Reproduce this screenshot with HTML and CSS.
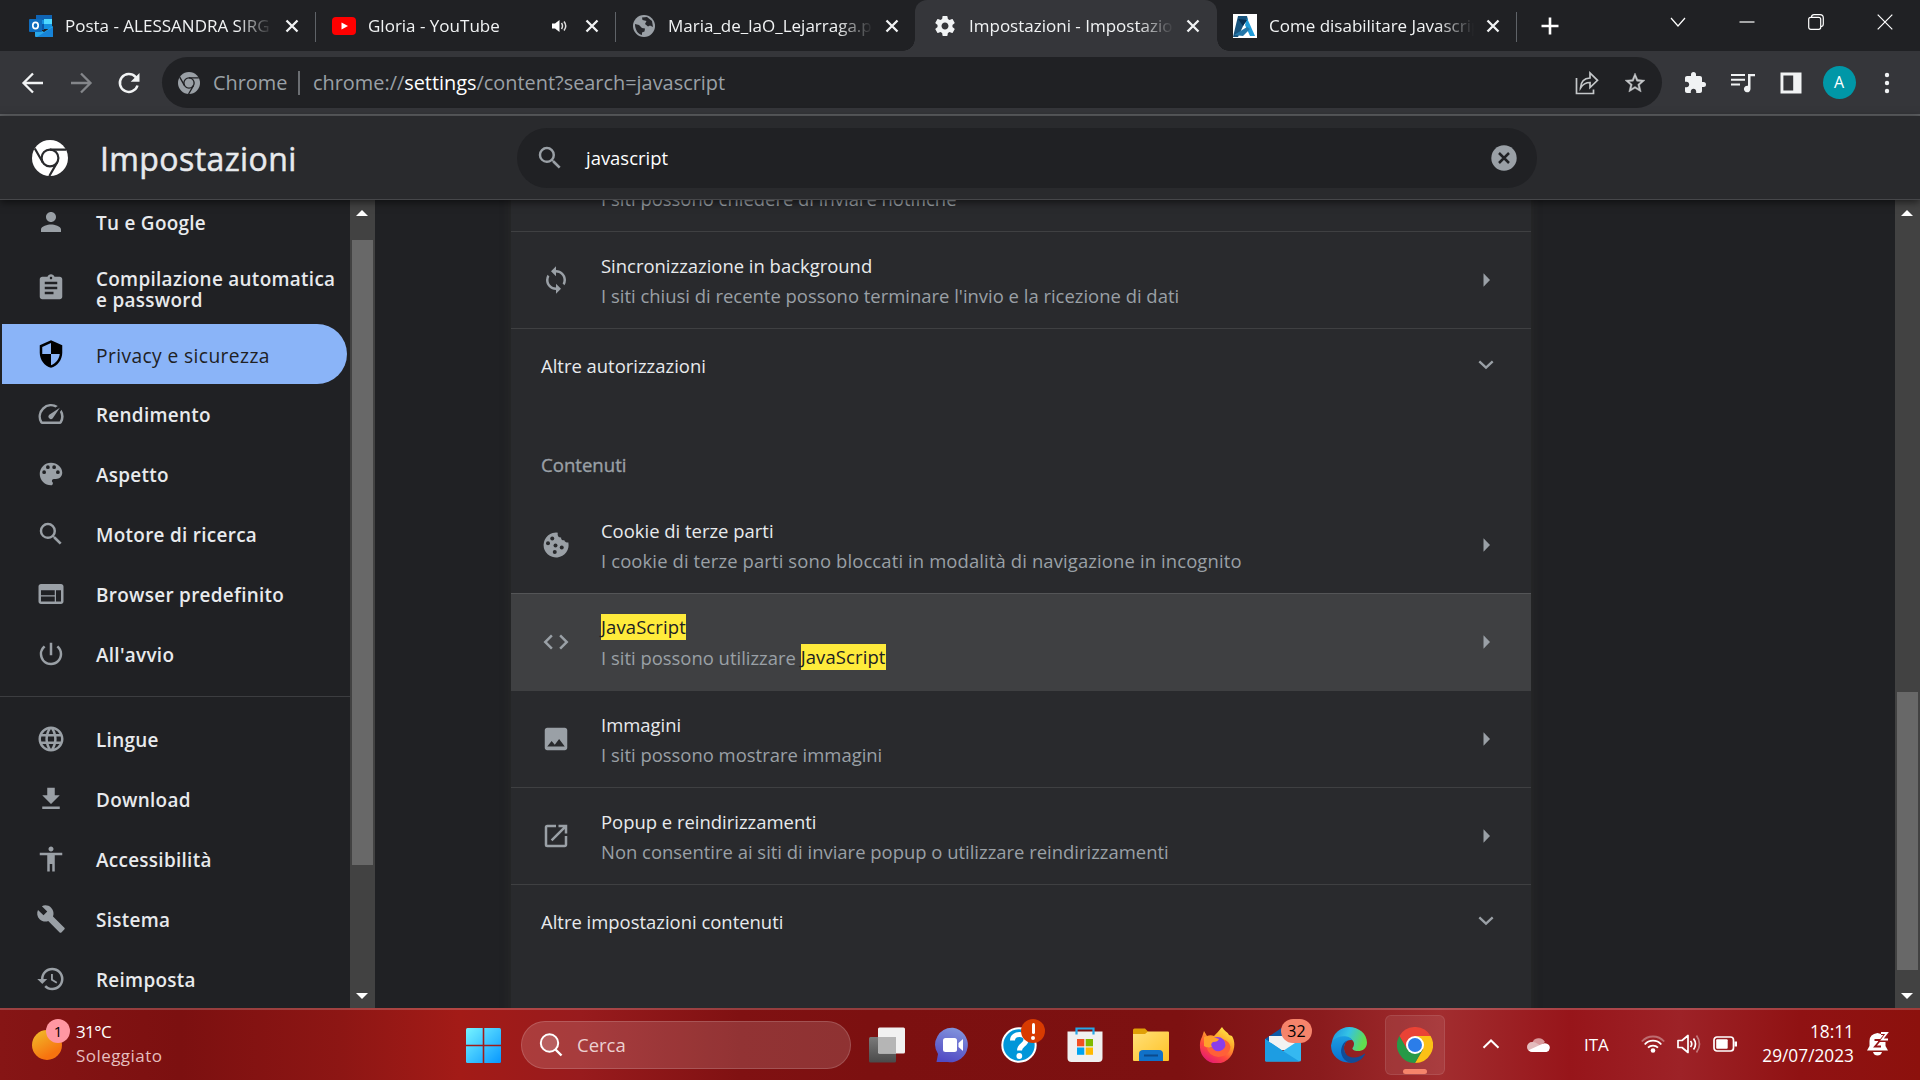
FILE: index.html
```html
<!DOCTYPE html>
<html lang="it">
<head>
<meta charset="utf-8">
<title>Impostazioni - Impostazioni contenuti</title>
<link rel="stylesheet" href="styles.css">
</head>
<body>
<svg class="defs" width="0" height="0" aria-hidden="true">
  <symbol id="x" viewBox="0 0 16 16"><path d="M2.500 2.500l11 11M13.500 2.500l-11 11" fill="none" stroke="currentColor" stroke-width="2.300"/></symbol>
  <symbol id="mono-chrome" viewBox="0 0 36 36"><circle cx="18" cy="18" r="18" fill="currentColor"/><circle cx="18" cy="18" r="8.400" fill="none" stroke="var(--gap)" stroke-width="2.200"/><path d="M18 9.600H34M10.700 22.200L2.800 8.500M25.300 22.200L17.300 36" stroke="var(--gap)" stroke-width="2.200" fill="none"/></symbol>
  <symbol id="search" viewBox="0 0 24 24"><path fill="currentColor" d="M15.500 14h-.79l-.28-.27A6.471 6.471 0 0 0 16 9.500 6.500 6.500 0 1 0 9.500 16c1.610 0 3.090-.59 4.230-1.570l.27.28v.79l5 4.990L20.490 19l-4.990-5zm-6 0C7.010 14 5 11.990 5 9.500S7.010 5 9.500 5 14 7.010 14 9.500 11.990 14 9.500 14z"/></symbol>
  <symbol id="arrow" viewBox="0 0 8 14"><path d="M0.500 0.300L7 7L0.500 13.700z" fill="currentColor"/></symbol>
  <symbol id="chevron" viewBox="0 0 16 10"><path d="M1.300 1.300L8 7.700L14.700 1.300" fill="none" stroke="currentColor" stroke-width="2.300"/></symbol>
</svg>

<div class="tabstrip">
  <div class="tab">
    <svg class="fav" viewBox="0 0 24 24"><rect x="7" y="1" width="16" height="14" rx="1" fill="#1490df"/><path d="M7 1h16v5H7z" fill="#0f64b4"/><path d="M15 5h8v5h-8z" fill="#50d9ff"/><path d="M7 10h8v6H7z" fill="#0a58a8"/><path d="M6 13l9 5 9-6v10a1 1 0 0 1-1 1H7a1 1 0 0 1-1-1z" fill="#28a8ea"/><path d="M8 23l16-10v9a1 1 0 0 1-1 1z" fill="#1784d8"/><rect x="0" y="5" width="13" height="13" rx="1" fill="#0f6cbd"/><ellipse cx="6.500" cy="11.500" rx="2.700" ry="3.100" fill="none" stroke="#fff" stroke-width="1.700"/></svg>
    <span class="tab-title">Posta - ALESSANDRA SIRG</span>
    <svg class="tab-x"><use href="#x"/></svg>
  </div>
  <div class="tab split">
    <svg class="fav" viewBox="0 0 24 24"><rect y="3" width="24" height="18" rx="4" fill="#f00"/><path d="M9.500 8.500v7l6.500-3.500z" fill="#fff"/></svg>
    <span class="tab-title">Gloria - YouTube</span>
    <svg class="speaker" viewBox="0 0 16 14"><path d="M0 4.500h3L7.500 1v12L3 9.500H0z" fill="#fff"/><path d="M9.500 4q2 3 0 6M12 2.500q3.500 4.500 0 9" fill="none" stroke="#ddd" stroke-width="1.500"/></svg>
    <svg class="tab-x"><use href="#x"/></svg>
  </div>
  <div class="tab split">
    <svg class="fav" viewBox="0 0 24 24"><circle cx="12" cy="12" r="11" fill="#9aa0a6"/><path d="M10 3.500l5-.5 5 4 1 6-3-1.500-2 1-3-2.500 1.500-3-4-1zM3 10l4 1 3 3 3 .5-.5 3-2.500 1V21C6 20 3 16 3 10z" fill="#26272b"/></svg>
    <span class="tab-title">Maria_de_laO_Lejarraga.pd</span>
    <svg class="tab-x"><use href="#x"/></svg>
  </div>
  <div class="tab active">
    <svg class="fav" viewBox="0 0 24 24"><path fill="#f1f3f4" d="M19.430 12.980c.04-.32.070-.64.070-.98s-.03-.66-.07-.98l2.110-1.650c.19-.15.24-.42.12-.64l-2-3.460c-.12-.22-.39-.3-.61-.22l-2.490 1c-.52-.4-1.080-.73-1.690-.98l-.38-2.650A.488.488 0 0 0 14 2h-4c-.25 0-.46.18-.49.420l-.38 2.650c-.61.250-1.170.590-1.690.980l-2.490-1c-.23-.09-.49 0-.61.220l-2 3.460c-.13.220-.07.490.120.640l2.110 1.650c-.04.320-.07.650-.07.980s.030.660.070.980l-2.110 1.650c-.19.150-.24.420-.12.640l2 3.460c.12.220.390.300.610.220l2.490-1c.52.400 1.080.730 1.690.980l.38 2.650c.03.240.240.420.490.420h4c.250 0 .46-.18.490-.42l.38-2.650c.61-.25 1.170-.59 1.690-.98l2.490 1c.23.090.490 0 .61-.22l2-3.460c.12-.22.070-.49-.12-.64l-2.110-1.650zM12 15.500c-1.930 0-3.500-1.570-3.500-3.500s1.570-3.500 3.500-3.500 3.500 1.570 3.500 3.500-1.570 3.500-3.500 3.500z"/></svg>
    <span class="tab-title">Impostazioni - Impostazion</span>
    <svg class="tab-x"><use href="#x"/></svg>
  </div>
  <div class="tab last">
    <svg class="fav" viewBox="0 0 24 24"><path fill="#fff" d="M0 0h24v24H0z"/><path d="M5 2h9l1 4-4 4-6 13H0z" fill="#17537d"/><path d="M14 4l8 18h-5l-5-11z" fill="#1f9bd8"/><path d="M1 21l13-8 3 2-7 7z" fill="#2376a8"/><path d="M5 5l9 1-4 6z" fill="#082f52"/></svg>
    <span class="tab-title">Come disabilitare Javascrip</span>
    <svg class="tab-x"><use href="#x"/></svg>
  </div>
  <div class="newtab"><svg viewBox="0 0 18 18"><path d="M9 0.500v17M0.500 9h17" stroke="#fff" stroke-width="2.600"/></svg></div>
  <div class="winctl">
    <svg viewBox="0 0 16 16"><path d="M1 4l7 8 7-8" /></svg>
    <svg viewBox="0 0 16 16"><path d="M0.500 8h15"/></svg>
    <svg viewBox="0 0 16 16"><rect x="0.700" y="3.300" width="12" height="12" rx="2"/><path d="M3.500 3Q3.700.7 6 .7h6q3.300 0 3.300 3.300v6q0 2.300-2.300 2.600"/></svg>
    <svg viewBox="0 0 16 16"><path d="M0.700.7l14.600 14.600M15.300.7L.7 15.300"/></svg>
  </div>
</div>

<div class="toolbar">
  <div class="nav">
    <svg viewBox="0 0 24 24"><path d="M22 12H3.500M12 2.500L2.500 12l9.500 9.500" fill="none" stroke="#f1f3f4" stroke-width="2.300"/></svg>
    <svg viewBox="0 0 24 24"><path d="M2 12h18.500M12 2.500l9.500 9.500-9.500 9.500" fill="none" stroke="#84868a" stroke-width="2.300"/></svg>
    <svg viewBox="0 0 24 24"><path d="M20.500 14.500A9 9 0 1 1 18.500 5.800L20.500 8" fill="none" stroke="#f1f3f4" stroke-width="2.500"/><path d="M22.500 2v8.800h-8.800z" fill="#f1f3f4"/></svg>
  </div>
  <div class="omnibox">
    <svg class="omni-logo"><use href="#mono-chrome"/></svg>
    <span class="omni-name">Chrome</span>
    <span class="omni-url">chrome://<b>settings</b>/content?search=javascript</span>
    <svg class="omni-icon share" viewBox="0 0 24 24"><path d="M1.500 7v15.500h17v-4" fill="none" stroke="#c4c7c9" stroke-width="1.700"/><path d="M5.500 17c.3-6.500 4-9.800 9.500-10V2l7.500 7.300-7.500 7.200v-5c-4.500 0-7 1.500-9.500 5.500z" fill="none" stroke="#c4c7c9" stroke-width="1.700"/></svg>
    <svg class="omni-icon" viewBox="0 0 24 24"><path fill="#c4c7c9" stroke="#c4c7c9" stroke-width=".4" d="M22 9.240l-7.190-.62L12 2 9.190 8.630 2 9.240l5.460 4.730L5.820 21 12 17.270 18.180 21l-1.630-7.030L22 9.240zM12 15.400l-3.760 2.270 1-4.280-3.320-2.880 4.380-.38L12 6.100l1.710 4.040 4.380.38-3.320 2.880 1 4.280L12 15.400z"/></svg>
  </div>
  <div class="actions">
    <svg viewBox="0 0 24 24"><path fill="#f1f3f4" d="M20.500 11H19V7c0-1.100-.9-2-2-2h-4V3.500a2.500 2.500 0 0 0-5 0V5H4c-1.100 0-1.990.9-1.990 2v3.800H3.500c1.490 0 2.700 1.210 2.700 2.700s-1.210 2.700-2.700 2.700H2V20c0 1.100.9 2 2 2h3.800v-1.500c0-1.490 1.210-2.700 2.700-2.700s2.700 1.210 2.700 2.700V22H17c1.100 0 2-.9 2-2v-4h1.500a2.500 2.500 0 0 0 0-5z"/></svg>
    <svg viewBox="0 0 24 24"><path fill="#f1f3f4" d="M0 3h14v2H0zM0 7.800h14v2H0zM0 12.600h9v2H0zM16 3h8v2.200h-4.500V18a3.300 3.300 0 1 1-2.500-3.200V3z"/></svg>
    <svg viewBox="0 0 24 24"><path fill="#f1f3f4" fill-rule="evenodd" d="M1.500 1.500h21v21h-21zM4.400 4.400v15.200h9.800V4.400z"/></svg>
    <span class="avatar">A</span>
    <svg viewBox="0 0 24 24"><g fill="#f1f3f4"><circle cx="12" cy="4" r="2.200"/><circle cx="12" cy="12" r="2.200"/><circle cx="12" cy="20" r="2.200"/></g></svg>
  </div>
</div>

<header class="header">
  <svg class="logo"><use href="#mono-chrome"/></svg>
  <h1>Impostazioni</h1>
  <div class="searchbox">
    <svg class="ico"><use href="#search"/></svg>
    <span>javascript</span>
    <svg class="clear" viewBox="0 0 26 26"><circle cx="13" cy="13" r="12.700" fill="#9aa0a6"/><path d="M8 8l10 10M18 8L8 18" stroke="#202124" stroke-width="2.500"/></svg>
  </div>
</header>

<div class="page">
  <nav class="sidebar">
    <a class="item"><svg viewBox="0 0 24 24"><path d="M12 12c2.210 0 4-1.790 4-4s-1.790-4-4-4-4 1.790-4 4 1.790 4 4 4zm0 2c-2.670 0-8 1.340-8 4v2h16v-2c0-2.660-5.330-4-8-4z"/></svg><span>Tu e Google</span></a>
    <a class="item tall"><svg viewBox="0 0 24 24"><path d="M19 3h-4.180C14.400 1.840 13.300 1 12 1c-1.300 0-2.400.84-2.820 2H5c-1.100 0-2 .9-2 2v14c0 1.100.9 2 2 2h14c1.100 0 2-.9 2-2V5c0-1.100-.9-2-2-2zm-7 0c.55 0 1 .45 1 1s-.45 1-1 1-1-.45-1-1 .45-1 1-1zm2 14H7v-2h7v2zm3-4H7v-2h10v2zm0-4H7V7h10v2z"/></svg><span>Compilazione automatica<br>e password</span></a>
    <a class="item selected"><svg viewBox="0 0 24 24"><path d="M12 1L3 5v6c0 5.550 3.840 10.740 9 12 5.160-1.260 9-6.450 9-12V5l-9-4zm0 10.990h7c-.53 4.120-3.280 7.790-7 8.940V12H5V6.300l7-3.110v8.800z"/></svg><span>Privacy e sicurezza</span></a>
    <a class="item"><svg viewBox="0 0 24 24"><path d="M20.380 8.570l-1.230 1.850a8 8 0 0 1-.22 7.580H5.070A8 8 0 0 1 15.580 6.850l1.850-1.230A10 10 0 0 0 3.350 19a2 2 0 0 0 1.720 1h13.850a2 2 0 0 0 1.740-1 10 10 0 0 0-.27-10.440zm-9.790 6.840a2 2 0 0 0 2.830 0l5.660-8.490-8.490 5.660a2 2 0 0 0 0 2.830z"/></svg><span>Rendimento</span></a>
    <a class="item"><svg viewBox="0 0 24 24"><path d="M12 3a9 9 0 0 0 0 18c.83 0 1.500-.67 1.500-1.500 0-.39-.15-.74-.39-1.010-.23-.26-.38-.61-.38-.99 0-.83.67-1.500 1.500-1.500H16c2.760 0 5-2.240 5-5 0-4.420-4.030-8-9-8zm-5.500 9a1.500 1.500 0 1 1 0-3 1.500 1.500 0 0 1 0 3zm3-4a1.500 1.500 0 1 1 0-3 1.500 1.500 0 0 1 0 3zm5 0a1.500 1.500 0 1 1 0-3 1.500 1.500 0 0 1 0 3zm3 4a1.500 1.500 0 1 1 0-3 1.500 1.500 0 0 1 0 3z"/></svg><span>Aspetto</span></a>
    <a class="item"><svg><use href="#search"/></svg><span>Motore di ricerca</span></a>
    <a class="item"><svg viewBox="0 0 24 24"><path d="M20 4H4c-1.100 0-1.990.9-1.990 2L2 18c0 1.100.9 2 2 2h16c1.100 0 2-.9 2-2V6c0-1.100-.9-2-2-2zm-5 14H4v-4h11v4zm0-5H4V9h11v4zm5 5h-4V9h4v9z"/></svg><span>Browser predefinito</span></a>
    <a class="item"><svg viewBox="0 0 24 24"><path d="M13 3h-2v10h2V3zm4.830 2.170l-1.420 1.420A6.920 6.920 0 0 1 19 12c0 3.870-3.130 7-7 7A6.995 6.995 0 0 1 7.580 6.580L6.170 5.170A8.932 8.932 0 0 0 3 12a9 9 0 0 0 18 0c0-2.740-1.230-5.180-3.170-6.830z"/></svg><span>All'avvio</span></a>
    <hr>
    <a class="item"><svg viewBox="0 0 24 24"><path d="M11.990 2C6.470 2 2 6.480 2 12s4.470 10 9.990 10C17.520 22 22 17.520 22 12S17.520 2 11.990 2zm6.930 6h-2.950a15.650 15.650 0 0 0-1.380-3.560A8.030 8.030 0 0 1 18.920 8zM12 4.040c.83 1.200 1.480 2.530 1.910 3.960h-3.820c.43-1.430 1.080-2.760 1.910-3.960zM4.260 14C4.100 13.360 4 12.690 4 12s.1-1.360.26-2h3.380c-.08.66-.14 1.320-.14 2s.06 1.340.14 2H4.260zm.82 2h2.950c.32 1.250.78 2.450 1.380 3.560A7.987 7.987 0 0 1 5.080 16zm2.950-8H5.080a7.987 7.987 0 0 1 4.330-3.560A15.650 15.650 0 0 0 8.030 8zM12 19.960c-.83-1.200-1.480-2.530-1.910-3.960h3.820c-.43 1.430-1.080 2.760-1.910 3.960zM14.340 14H9.660c-.09-.66-.16-1.320-.16-2s.07-1.350.16-2h4.680c.09.65.16 1.320.16 2s-.07 1.340-.16 2zm.25 5.560c.6-1.110 1.060-2.310 1.380-3.560h2.950a8.030 8.030 0 0 1-4.330 3.560zM16.360 14c.08-.66.14-1.320.14-2s-.06-1.340-.14-2h3.380c.16.64.26 1.310.26 2s-.1 1.360-.26 2h-3.380z"/></svg><span>Lingue</span></a>
    <a class="item"><svg viewBox="0 0 24 24"><path d="M19 9h-4V3H9v6H5l7 7 7-7zM5 18v2h14v-2H5z"/></svg><span>Download</span></a>
    <a class="item"><svg viewBox="0 0 24 24"><path d="M12 2c1.100 0 2 .9 2 2s-.9 2-2 2-2-.9-2-2 .9-2 2-2zm9 7h-6v13h-2v-6h-2v6H9V9H3V7h18v2z"/></svg><span>Accessibilità</span></a>
    <a class="item"><svg viewBox="0 0 24 24"><path d="M22.700 19l-9.100-9.100c.9-2.300.4-5-1.500-6.900-2-2-5-2.400-7.400-1.300L9 6 6 9 1.600 4.700C.4 7.100.9 10.100 2.900 12.100c1.900 1.900 4.600 2.400 6.900 1.500l9.100 9.100c.4.4 1 .4 1.400 0l2.300-2.300c.5-.4.5-1.100.1-1.400z"/></svg><span>Sistema</span></a>
    <a class="item"><svg viewBox="0 0 24 24"><path d="M13 3a9 9 0 0 0-9 9H1l3.890 3.890.07.14L9 12H6c0-3.870 3.130-7 7-7s7 3.130 7 7-3.130 7-7 7c-1.930 0-3.680-.79-4.940-2.060l-1.420 1.420A8.954 8.954 0 0 0 13 21a9 9 0 0 0 0-18zm-1 5v5l4.280 2.540.72-1.210-3.500-2.080V8H12z"/></svg><span>Reimposta</span></a>
  </nav>
  <div class="scrollbar side"><i class="tri-up"></i><i class="thumb"></i><i class="tri-down"></i></div>
  <main class="main">
    <section class="card">
      <div class="row first"><div class="txt"><p class="sub">I siti possono chiedere di inviare notifiche</p></div></div>
      <div class="row">
        <svg class="ricon" viewBox="0 0 24 24"><path d="M12 4V1L8 5l4 4V6c3.310 0 6 2.690 6 6 0 1.010-.25 1.970-.7 2.800l1.460 1.460A7.930 7.930 0 0 0 20 12c0-4.420-3.580-8-8-8zm0 14c-3.310 0-6-2.690-6-6 0-1.010.25-1.970.7-2.800L5.240 7.740A7.930 7.930 0 0 0 4 12c0 4.420 3.580 8 8 8v3l4-4-4-4v3z"/></svg>
        <div class="txt"><p>Sincronizzazione in background</p><p class="sub">I siti chiusi di recente possono terminare l'invio e la ricezione di dati</p></div>
        <svg class="arr"><use href="#arrow"/></svg>
      </div>
      <div class="expand"><span>Altre autorizzazioni</span><svg><use href="#chevron"/></svg></div>
      <h2>Contenuti</h2>
      <div class="row plain">
        <svg class="ricon" viewBox="0 0 24 24"><path d="M21.800 9.700c-1.300.5-2.800.1-3.100-1.500-1.700.3-2.800-.8-2.600-2.200-2 .2-3.300-1.600-2.600-3.900A10 10 0 1 0 21.800 9.700z"/><g fill="#292a2d"><circle cx="9" cy="6.700" r="1.600"/><circle cx="5.600" cy="10.500" r="1.600"/><circle cx="11.600" cy="12.300" r="1.600"/><circle cx="16.600" cy="14" r="1.600"/><circle cx="11" cy="17.500" r="1.600"/></g></svg>
        <div class="txt"><p>Cookie di terze parti</p><p class="sub loose">I cookie di terze parti sono bloccati in modalità di navigazione in incognito</p></div>
        <svg class="arr"><use href="#arrow"/></svg>
      </div>
      <div class="row hover">
        <svg class="ricon" viewBox="0 0 24 24"><path d="M9.400 16.600L4.800 12l4.600-4.600L8 6l-6 6 6 6 1.400-1.400zm5.200 0l4.600-4.600-4.600-4.600L16 6l6 6-6 6-1.400-1.400z"/></svg>
        <div class="txt"><p><mark>JavaScript</mark></p><p class="sub">I siti possono utilizzare <mark>JavaScript</mark></p></div>
        <svg class="arr"><use href="#arrow"/></svg>
      </div>
      <div class="row plain">
        <svg class="ricon" viewBox="0 0 24 24"><path d="M21 19V5c0-1.100-.9-2-2-2H5c-1.100 0-2 .9-2 2v14c0 1.100.9 2 2 2h14c1.100 0 2-.9 2-2zM8.500 13.500l2.500 3.010L14.500 12l4.500 6H5l3.500-4.500z"/></svg>
        <div class="txt"><p>Immagini</p><p class="sub">I siti possono mostrare immagini</p></div>
        <svg class="arr"><use href="#arrow"/></svg>
      </div>
      <div class="row">
        <svg class="ricon" viewBox="0 0 24 24"><path d="M19 19H5V5h7V3H5a2 2 0 0 0-2 2v14a2 2 0 0 0 2 2h14c1.100 0 2-.9 2-2v-7h-2v7zM14 3v2h3.590l-9.830 9.830 1.410 1.410L19 6.410V10h2V3h-7z"/></svg>
        <div class="txt"><p>Popup e reindirizzamenti</p><p class="sub">Non consentire ai siti di inviare popup o utilizzare reindirizzamenti</p></div>
        <svg class="arr"><use href="#arrow"/></svg>
      </div>
      <div class="expand"><span>Altre impostazioni contenuti</span><svg><use href="#chevron"/></svg></div>
    </section>
  </main>
  <div class="scrollbar main-bar"><i class="tri-up"></i><i class="thumb"></i><i class="tri-down"></i></div>
</div>

<footer class="taskbar">
  <div class="weather">
    <div class="sun"><span class="badge">1</span></div>
    <div><div class="temp">31°C</div><div class="cond">Soleggiato</div></div>
  </div>
  <svg class="start" viewBox="0 0 35 35"><defs><linearGradient id="win" x1="0" y1="0" x2="1" y2="1"><stop stop-color="#76f4ff"/><stop offset="1" stop-color="#0797ff"/></linearGradient><mask id="panes"><path fill="#fff" d="M0 0h16.700v16.700H0zM18.300 0H35v16.700H18.300zM0 18.300h16.700V35H0zM18.300 18.300H35V35H18.300z"/></mask></defs><rect width="35" height="35" rx="1.500" fill="url(#win)" mask="url(#panes)"/></svg>
  <div class="tsearch"><svg viewBox="0 0 24 24"><circle cx="10.500" cy="10" r="8.700" fill="#ffffff30" stroke="#fff" stroke-width="2"/><path d="M16.500 16.500l6 6" stroke="#fff" stroke-width="2.400"/></svg><span>Cerca</span></div>
  <div class="apps">
    <div class="app"><svg viewBox="0 0 36 36"><defs><linearGradient id="tv" x2="0" y2="1"><stop stop-color="#7a7a7a"/><stop offset="1" stop-color="#4a4a4a"/></linearGradient></defs><rect y="10" width="27" height="25.500" rx="1.500" fill="url(#tv)"/><rect x="9" y="0.500" width="27" height="26" rx="1.500" fill="#f1f1f1"/><path d="M9 10h18v16.500H10.500A1.500 1.500 0 0 1 9 25z" fill="#b5b5b5"/></svg></div>
    <div class="app"><svg viewBox="0 0 36 36"><defs><linearGradient id="ch" x1=".7" y1="0" x2=".4" y2="1"><stop stop-color="#8296dd"/><stop offset=".5" stop-color="#6a6ed0"/><stop offset="1" stop-color="#524bc4"/></linearGradient></defs><path d="M18 .7A17 17 0 1 1 13 35H1.500L3 27A17 17 0 0 1 18 .7z" fill="url(#ch)"/><rect x="8" y="11" width="14" height="14" rx="2.500" fill="#fff"/><path d="M23.500 16l4.500-4v12l-4.500-4z" fill="#fff"/></svg></div>
    <div class="app"><svg viewBox="0 0 36 36"><circle cx="18" cy="18" r="16.700" fill="#0096d9" stroke="#fff" stroke-width="2"/><path d="M11.500 13.500c0-8 14-8 13.500-.5-.3 5-6.500 5-6.500 10.500" fill="none" stroke="#fff" stroke-width="5"/><circle cx="18.300" cy="29" r="2.900" fill="#fff"/></svg><span class="alert"><i></i></span></div>
    <div class="app"><svg viewBox="0 0 36 36"><path d="M.5 4.500h35V31a4 4 0 0 1-4 4h-27a4 4 0 0 1-4-4z" fill="#f0f0f0"/><path d="M9.500 7.500V1.500h17v6" fill="none" stroke="#25a8e8" stroke-width="2.200"/><path d="M10 12h7.300v7.300H10z" fill="#f25022"/><path d="M18.700 12H26v7.300h-7.300z" fill="#7fba00"/><path d="M10 20.500h7.300v7.300H10z" fill="#00a4ef"/><path d="M18.700 20.500H26v7.300h-7.300z" fill="#ffb900"/></svg></div>
    <div class="app"><svg viewBox="0 0 36 36"><defs><linearGradient id="fo" x2="1" y2="1"><stop stop-color="#ffe078"/><stop offset="1" stop-color="#ffc226"/></linearGradient></defs><path d="M0 3a1.500 1.500 0 0 1 1.500-1.500H12L15.500 5v6H0z" fill="#e0a006"/><path d="M0 7h12l3-2.500h20a1 1 0 0 1 1 1V33a1 1 0 0 1-1 1H1a1 1 0 0 1-1-1z" fill="url(#fo)"/><path d="M6 34v-7q0-4 4-4h16q4 0 4 4v7z" fill="#1071c8"/><path d="M11 28.500h14" stroke="#0b4a8c" stroke-width="2"/></svg></div>
    <div class="app"><svg viewBox="0 0 36 36"><defs><linearGradient id="ff" x1=".8" y1="0" x2=".2" y2="1"><stop stop-color="#fff04a"/><stop offset=".35" stop-color="#ffa62a"/><stop offset=".65" stop-color="#ff4a3c"/><stop offset="1" stop-color="#e0127c"/></linearGradient></defs><path d="M23 0c2 4 6 5 7 8l3 1c2.500 4 3 9 1.500 14A17 17 0 0 1 1.500 24C.3 18 1 13 3 10l2-6 3 5c2-1 5-1 7 0 2-2 5-5 8-9z" fill="url(#ff)"/><circle cx="18.500" cy="18.500" r="8.500" fill="#8b3dea"/><path d="M5 10q5-2 9 0l6 2q-1 3-6 3-3 2-1 5-4 2-8-1z" fill="#ffa02c"/><path d="M13 20q2 5 8 4 6-2 5.500-8-1-3-3-4 7 2 8 8-1 9-12 10-10-1-12-10 3 2 5.500 0z" fill="#ff6038"/></svg></div>
    <div class="app"><svg viewBox="0 0 36 36"><path d="M0 12L18 0l18 12v10H0z" fill="#0e5aa6"/><path d="M4 9h28v14H4z" fill="#f2f2f2"/><path d="M0 12l18 12 18-12v21a1.500 1.500 0 0 1-1.500 1.500h-33A1.500 1.500 0 0 1 0 33z" fill="#35b8f1"/><path d="M0 12v21q0 1.500 1.500 1.500h33L18 24z" fill="#1d9de2"/></svg><span class="count">32</span></div>
    <div class="app"><svg viewBox="0 0 36 36"><defs><linearGradient id="ed" x2="1" y2=".3"><stop stop-color="#1a8fdd"/><stop offset=".5" stop-color="#34c3e6"/><stop offset="1" stop-color="#62dc4f"/></linearGradient><linearGradient id="ed2" x2="0" y2="1"><stop stop-color="#1b9de2"/><stop offset="1" stop-color="#0a6fd0"/></linearGradient></defs><path d="M1 15A17.500 17.500 0 0 1 18 0c10 0 18 7 18 15.500 0 6-4.500 8.500-9 8.500-4 0-6-1.500-5.500-3 .8-1.200 1.500-2 1.500-4.500C22.500 11 14 7 1 15z" fill="url(#ed)"/><path d="M1 14.500C7 7.500 19 8 21.500 13.500 17 11.500 12.500 16 13 22c.5 7 7 11 12.500 12.300C14 38.500 0 32 0 18.500z" fill="url(#ed2)"/><path d="M16.500 13.500C10 19 13 30 22 30.500c5 .3 9-2 11-3.500.8-.5 1.200 0 .8.800C31 33 25 36 20 36c-7-1-11.500-9-9.500-15 .8-3.500 3-6.500 6-7.500z" fill="#134b96"/></svg></div>
    <div class="app current"><svg viewBox="0 0 36 36"><path d="M18 9h15.600A18 18 0 0 1 18 36l7.800-13.500z" fill="#fbc116"/><path d="M18 9h15.600A18 18 0 0 0 2.400 9l7.800 13.500z" fill="#ea4335"/><path d="M2.400 9a18 18 0 0 0 15.600 27l7.800-13.500H10.200z" fill="#269a47"/><circle cx="18" cy="18" r="9" fill="#fff"/><circle cx="18" cy="18" r="7" fill="#2b7de9"/></svg></div>
  </div>
  <div class="tray">
    <svg class="more" viewBox="0 0 18 10"><path d="M1.500 8.700L9 1.500l7.500 7.200" fill="none" stroke="#fff" stroke-width="2"/></svg>
    <svg class="cloud" viewBox="0 0 24 16"><path d="M5 7a7 7 0 0 1 13-1.500L12 10z" fill="#d99a9c"/><path d="M5 15.500A5 5 0 0 1 5 5.500c2-.3 4 .5 6 2l5 3-8 5z" fill="#e3bcbd"/><path d="M5 15.500q-2 0-3.500-1.700L15 7.500q3-1.500 5.500 0a4.300 4.300 0 0 1-1 8z" fill="#fff"/></svg>
    <span class="lang">ITA</span>
    <svg class="wifi" viewBox="0 0 24 18"><g fill="none" stroke="#fff" stroke-width="1.800"><path d="M.8 6.500a15 15 0 0 1 22.400 0" opacity=".35"/><path d="M3.700 9.500a11 11 0 0 1 16.600 0M7 12.700a7 7 0 0 1 10 0"/></g><circle cx="12" cy="15.500" r="2.300" fill="#fff"/></svg>
    <svg class="vol" viewBox="0 0 24 20"><g fill="none" stroke="#fff" stroke-width="1.700"><path d="M1 6.500h4L11 1.500v17L5 13.500H1z" stroke-linejoin="round"/><path d="M13.500 7q2.500 3 0 6M16.500 4.500q4 5.500 0 11"/><path d="M19.500 1.500q6 8.500 0 17" opacity=".4"/></g></svg>
    <svg class="bat" viewBox="0 0 24 16"><rect x="1" y="1" width="19.500" height="14" rx="3" fill="none" stroke="#fff" stroke-width="1.700"/><rect x="3.200" y="3.300" width="11.500" height="9.500" rx="1" fill="#fff"/><path d="M21.500 5.500h2.500v5h-2.500z" fill="#fff"/></svg>
    <div class="clock"><div>18:11</div><div>29/07/2023</div></div>
    <svg class="bell" viewBox="0 0 22 24"><path d="M0 18.500L2.500 14V9q0-7 8-8 8 1 8 8v5l2.500 4.500zM6 20h9q-1 3.500-4.500 3.500T6 20z" fill="#fff"/><path d="M7.500 8h6L8 14.500h6" fill="none" stroke="#971516" stroke-width="1.800"/><path d="M14 1h6.500L15 8h6.500" fill="none" stroke="#971516" stroke-width="4"/><path d="M14 1h6L15 7.500h6" fill="none" stroke="#fff" stroke-width="1.800"/></svg>
  </div>
</footer>
</body>
</html>
```
FILE: styles.css
```css
* { box-sizing: border-box; }
body {
  margin: 0;
  width: 1920px;
  height: 1080px;
  overflow: hidden;
  display: flex;
  flex-direction: column;
  background: #202124;
  color: #e8eaed;
  font-family: "Open Sans", "Noto Sans", sans-serif;
  font-size: 18.450px;
}
svg { display: block; flex: none; }
.defs { position: absolute; }
p, h1, h2 { margin: 0; font-weight: 400; }

/* tab strip */
.tabstrip { flex: none; height: 51px; display: flex; padding-left: 15px; background: #202124; }
.tab { position: relative; width: 300px; height: 51px; padding: 0 15px 0 14px; display: flex; align-items: center; color: #f1f3f4; }
.tab.split { padding-left: 17px; }
.tab.last { padding: 0 16px; }
.tab.split::before { content: ""; position: absolute; left: 0; top: 12px; width: 1px; height: 30px; background: #5f6368; }
.tab.active { background: #35363a; border-radius: 12px 12px 0 0; width: 302px; padding: 0 16px 0 18px; z-index: 1; }
.tab.active::before, .tab.active::after { content: ""; position: absolute; bottom: 0; width: 12px; height: 12px; }
.tab.active::before { left: -12px; background: radial-gradient(circle at 0 0, transparent 11.500px, #35363a 12px); }
.tab.active::after { right: -12px; background: radial-gradient(circle at 100% 0, transparent 11.500px, #35363a 12px); }
.fav { width: 24px; height: 24px; }
.tab-title { flex: 1; margin-left: 12px; height: 27px; line-height: 27px; white-space: nowrap; overflow: hidden; font-size: 17px; -webkit-mask-image: linear-gradient(90deg, #000 calc(100% - 36px), transparent); mask-image: linear-gradient(90deg, #000 calc(100% - 36px), transparent); }
.tab-x { width: 16px; height: 16px; margin-left: 11px; }
.speaker { width: 16px; height: 14px; margin: 0 5px 0 4px; }
.newtab { position: relative; width: 66px; display: flex; align-items: center; justify-content: center; }
.newtab::before { content: ""; position: absolute; left: -1px; top: 12px; width: 1px; height: 30px; background: #5f6368; }
.newtab svg { width: 18px; height: 18px; }
.winctl { margin-left: auto; display: flex; gap: 53px; padding: 14px 27px 0 0; }
.winctl svg { width: 16px; height: 16px; fill: none; stroke: #fff; stroke-width: 1.200; }

/* toolbar */
.toolbar { flex: none; height: 65px; padding-left: 21px; display: flex; align-items: center; background: #35363a; border-bottom: 2px solid #5f6164; }
.nav { display: flex; gap: 24px; width: 141px; }
.nav svg { width: 24px; height: 24px; }
.omnibox { width: 1500px; height: 51px; border-radius: 26px; background: #202124; display: flex; align-items: center; padding: 0 15px 0 16px; font-size: 19.900px; color: #9aa0a6; }
.omni-logo { width: 22px; height: 22px; color: #9aa0a6; --gap: #202124; }
.omni-name { margin-left: 13px; width: 87px; border-right: 2px solid #6b6e72; line-height: 24px; }
.omni-url { margin-left: 13px; flex: 1; }
.omni-url b { font-weight: 400; color: #fff; }
.omni-icon { width: 24px; height: 24px; }
.share { margin-right: 24px; }
.actions { display: flex; align-items: center; gap: 24px; padding-left: 21px; }
.actions svg { width: 24px; height: 24px; }
.avatar { width: 33px; height: 33px; margin: 0 -4.500px; border-radius: 50%; background: #0097a7; color: #fff; font-size: 16px; line-height: 33px; text-align: center; }

/* settings header */
.header { position: relative; z-index: 2; flex: none; height: 84px; display: flex; align-items: center; padding-left: 32px; background: #292a2d; border-bottom: 1px solid #46474a; box-shadow: 0 2px 8px #0009; }
.logo { width: 36px; height: 36px; color: #fff; --gap: #292a2d; }
.header h1 { width: 417px; margin-left: 32px; padding-top: 3px; font-size: 32px; letter-spacing: .4px; -webkit-text-stroke: .5px; line-height: 42px; }
.searchbox { width: 1020px; height: 60px; border-radius: 30px; background: #202124; display: flex; align-items: center; padding: 0 20px 0 18px; }
.searchbox .ico { width: 30px; height: 30px; color: #9aa0a6; }
.searchbox span { flex: 1; margin-left: 21px; color: #fff; }
.clear { width: 26px; height: 26px; }

/* page */
.page { flex: none; height: 808px; display: flex; overflow: hidden; }
.sidebar { width: 350px; height: 816px; margin-top: -8px; overflow: hidden; }
.item { display: flex; align-items: center; height: 60px; padding-left: 36px; font-size: 18.900px; letter-spacing: .3px; font-weight: 600; line-height: 21px; white-space: nowrap; }
.item.tall { height: 72px; }
.item svg { width: 30px; height: 30px; fill: currentColor; color: #9aa0a6; }
.item span { margin-left: 30px; padding-top: 3px; }
.item.selected { margin: 0 3px 0 2px; padding-left: 34px; border-radius: 0 30px 30px 0; background: #8ab4f8; color: #202124; font-weight: 400; font-size: 19.200px; letter-spacing: .4px; }
.item.selected svg { color: #000; }
.sidebar hr { border: 0; height: 1px; margin: 12px 0; background: #3c3d40; }
.scrollbar { width: 25px; flex: none; position: relative; background: #424242; }
.scrollbar i { position: absolute; }
.thumb { left: 2px; width: 21px; background: #686868; }
.side .thumb { top: 40px; height: 625px; }
.main-bar .thumb { top: 492px; height: 278px; }
.tri-up, .tri-down { left: 6px; border: 6px solid transparent; }
.tri-up { top: 10px; border-top: 0; border-bottom-color: #fff; }
.tri-down { bottom: 9px; border-bottom: 0; border-top-color: #fff; }
.main { flex: 1; height: 808px; overflow: hidden; padding-left: 136px; }
.card { width: 1020px; height: 900px; margin-top: -66px; background: #292a2d; box-shadow: 0 0 8px #2b2b2b; }
.row { height: 97px; display: flex; align-items: center; padding: 0 40px 0 30px; border-top: 1px solid #3f4042; }
.row.plain, .row.first { border-color: transparent; }
.row.first { align-items: flex-end; padding: 0 0 17px 60px; }
.row.hover { height: 98px; margin-bottom: -1px; background: #3f4042; border-color: #545557; padding-bottom: 1px; }
.ricon { width: 30px; height: 30px; fill: #9aa0a6; flex: none; }
.txt { flex: 1; margin-left: 30px; padding-top: 1px; line-height: 30px; }
.sub { color: #9aa0a6; }
.loose { letter-spacing: .12px; }
mark { display: inline-block; height: 26px; line-height: 26px; letter-spacing: .12px; background: #ffeb3b; color: #202124; vertical-align: top; margin-top: 1px; }
.arr { width: 8px; height: 14px; color: #9aa0a6; }
.expand { height: 73px; border-top: 1px solid #3f4042; display: flex; align-items: center; justify-content: space-between; padding: 0 37px 0 30px; }
.expand svg { width: 16px; height: 10px; color: #9aa0a6; }
.card h2 { height: 95px; padding: 49px 30px 0; line-height: 30px; color: #9aa0a6; font-size: 18.600px; -webkit-text-stroke: .35px; }

/* taskbar */
.taskbar { flex: none; height: 72px; position: relative; display: flex; align-items: center; border-top: 2px solid #ffffff30; color: #fff; font-size: 17px; background: linear-gradient(90deg, #861515 0, #7c1010 180px, #8d1614 340px, #a31b17 460px, #981b1d 580px, #801112 740px, #7c1010 870px, #7d1111 1180px, #8a1b1d 1320px, #a22d2f 1440px, #97151a 1570px, #9d2227 1680px, #901213 1800px, #8c110d 1920px) border-box; }
.weather { display: flex; width: 466px; margin-top: -2px; padding-left: 32px; line-height: 24px; }
.sun { position: relative; width: 30px; height: 30px; margin: 10px 14px 0 0; border-radius: 50%; background: linear-gradient(150deg, #f0c02c, #f7730f 75%); }
.badge { position: absolute; left: 14px; top: -11px; width: 24px; height: 24px; border-radius: 50%; background: #ff97a2; color: #000; font-size: 15px; text-align: center; }
.temp { letter-spacing: -.6px; }
.cond { color: #e5bfbf; letter-spacing: .45px; }
.start { width: 35px; height: 35px; }
.tsearch { width: 330px; height: 48px; margin-left: 20px; padding-left: 17px; border: 1px solid #ffffff28; border-radius: 24px; background: #ffffff25; display: flex; align-items: center; gap: 14px; font-size: 18.500px; color: #ecd0d0; }
.tsearch svg { width: 24px; height: 24px; }
.tsearch span { margin-top: -2px; }
.apps { display: flex; gap: 6px; margin-left: 6px; }
.app { position: relative; width: 60px; height: 60px; display: flex; align-items: center; justify-content: center; border-radius: 6px; }
.app svg { width: 36px; height: 36px; }
.current { background: #ffffff14; border: 1px solid #ffffff18; }
.current::after { content: ""; position: absolute; bottom: 0; left: 17px; width: 24px; height: 5px; border-radius: 3px; background: #f6846b; }
.alert { position: absolute; left: 32px; top: 4px; width: 24px; height: 24px; border-radius: 50%; background: #d83b01; }
.alert i { position: absolute; left: 10.500px; top: 4px; width: 3.500px; height: 11px; border-radius: 2px; background: #fff; }
.alert::after { content: ""; position: absolute; left: 10.300px; bottom: 3.500px; width: 4px; height: 4px; border-radius: 50%; background: #fff; }
.count { position: absolute; left: 28px; top: 4px; width: 31px; height: 24px; border-radius: 12px; background: #f6846b; color: #000; font-size: 16px; line-height: 24px; text-align: center; }
.tray { display: flex; align-items: center; margin-left: 37px; margin-top: -2px; }
.more { width: 18px; height: 10px; margin-right: 27px; }
.cloud { width: 24px; height: 17px; }
.lang { width: 57px; margin-left: 33px; }
.wifi { width: 24px; height: 18px; margin-right: 12px; }
.vol { width: 24px; height: 20px; margin-right: 12px; }
.bat { width: 24px; height: 16px; margin-right: 12px; }
.clock { width: 105px; line-height: 24px; text-align: right; font-size: 17.300px; }
.bell { width: 22px; height: 24px; margin-left: 13px; }
```
